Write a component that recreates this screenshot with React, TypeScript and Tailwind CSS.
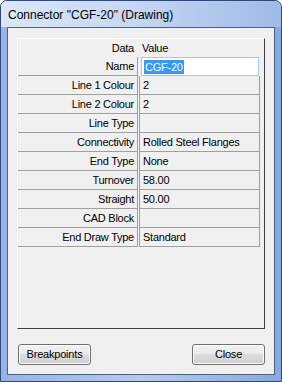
const rows: [string, string][] = [
  ["Name", "CGF-20"],
  ["Line 1 Colour", "2"],
  ["Line 2 Colour", "2"],
  ["Line Type", ""],
  ["Connectivity", "Rolled Steel Flanges"],
  ["End Type", "None"],
  ["Turnover", "58.00"],
  ["Straight", "50.00"],
  ["CAD Block", ""],
  ["End Draw Type", "Standard"],
];

function Button({ label }: { label: string }) {
  return (
    <button className="flex h-[21px] w-[73px] items-center justify-center rounded-[3px] border border-[#707070] bg-[linear-gradient(#f2f2f2_0%,#ebebeb_45%,#dddddd_50%,#cfcfcf_100%)] text-[11px] tracking-[-0.2px] text-black shadow-[inset_0_0_0_1px_#fcfcfc]">
      {label}
    </button>
  );
}

export default function App() {
  return (
    <div className="h-[382px] w-[282px] overflow-hidden rounded-t-[7px] border border-[#2f4a78] bg-[linear-gradient(90deg,#94b3e6,#b4cbef_50%,#86a8e0)] font-['Liberation_Sans',Arial,sans-serif]">
      <div className="flex h-[26px] items-center bg-[linear-gradient(90deg,#dce7f7,#c7d8f2_45%,#9fbbe8)] pl-[7px] pt-[1px]">
        <span className="text-[12px] text-black">Connector "CGF-20" (Drawing)</span>
      </div>
      <div className="mx-[6px] flex h-[348px] flex-col border border-[#4d6185] bg-[#f0f0f0] px-[9px] pt-[10px]">
        <div className="h-[291px] border border-b-[#404040] border-l-white border-r-[#404040] border-t-white text-[11px] tracking-[-0.25px] text-black">
          <div className="flex h-[18px] items-center">
            <div className="w-[120px] pr-[4px] text-right">Data</div>
            <div className="pl-[4px]">Value</div>
          </div>
          {rows.map(([label, value], i) => (
            <div key={label} className="flex h-[19px]">
              <div className="flex w-[120px] items-center justify-end border-b border-r border-b-[#a0a0a0] border-r-[#a0a0a0] pr-[3px]">
                {label}
              </div>
              {i === 0 ? (
                <div className="ml-[3px] flex w-[118px] items-center border border-[#a9c8e8] bg-white pl-[2px]">
                  <span className="bg-[#3399ff] px-px leading-[14px] text-white">{value}</span>
                </div>
              ) : (
                <div className="ml-px flex w-[121px] items-center border-b border-l border-r border-[#a0a0a0] pl-[3px]">
                  {value}
                </div>
              )}
            </div>
          ))}
        </div>
        <div className="mt-[15px] flex justify-between pl-px">
          <Button label="Breakpoints" />
          <Button label="Close" />
        </div>
      </div>
    </div>
  );
}
